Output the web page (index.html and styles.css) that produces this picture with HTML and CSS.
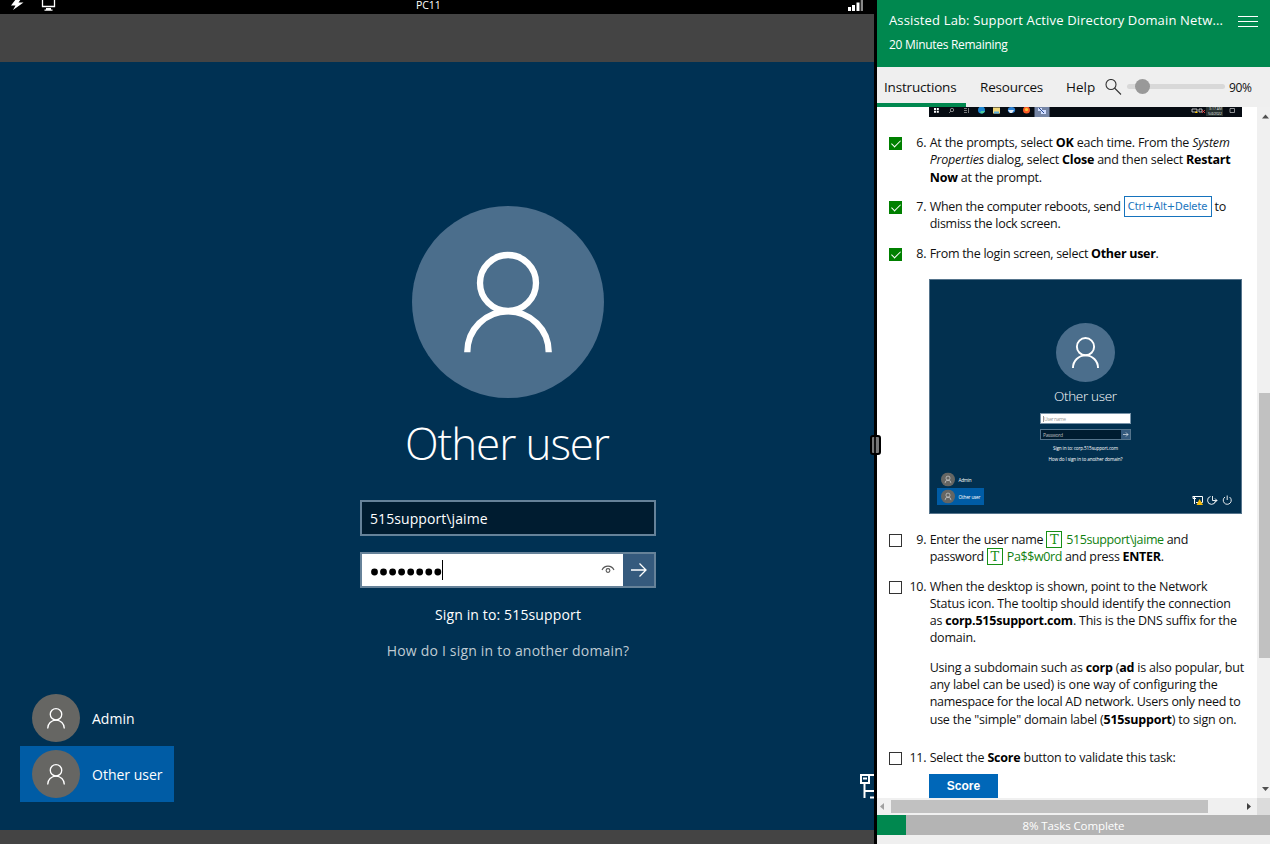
FILE: index.html
```html
<!DOCTYPE html>
<html lang="en">
<head>
<meta charset="utf-8">
<title>PC11 - Assisted Lab</title>
<link rel="stylesheet" href="styles.css">
</head>
<body>
<svg class="defs" aria-hidden="true">
  <symbol id="person" viewBox="0 0 192 192"><circle cx="96" cy="77" r="28"/><path d="M55.300 146.200v-.2a40.700 40.700 0 0 1 81.400 0v.2"/></symbol>
</svg>
<div class="app">
  <section class="vm">
    <header class="vm-bar">
      <div class="vm-tools">
        <svg width="60" height="14"><path d="M16 -1h5l-2.500 3.500h5L13 10l2.500-4.500h-4.500z" fill="#fff"/><path d="M42.500 -1v7.500h12V-1M42 6.500h13" fill="none" stroke="#fff" stroke-width="1.300"/><path d="M46 8h5v1.500h1.500v1.200h-8V9.500h1.500z" fill="#fff"/></svg>
      </div>
      <div class="vm-name">PC11</div>
      <svg class="signal" width="18" height="14"><path d="M0 7h3v4H0zM4 5h3v6H4zM8.500 2.500h3V11h-3z" fill="#fff"/><path d="M12.700 0h2.300v11h-2.300z" fill="#888"/></svg>
    </header>
    <div class="screen">
      <div class="login">
        <svg class="avatar" viewBox="0 0 192 192"><circle class="disc" cx="96" cy="96" r="96"/><use href="#person"/></svg>
        <h1>Other user</h1>
        <div class="field name">515support\jaime</div>
        <div class="field pass">
          <svg class="dots" width="76" height="28"><g fill="#000"><circle cx="4.500" cy="16" r="3.400"/><circle cx="13.500" cy="16" r="3.400"/><circle cx="22.600" cy="16" r="3.400"/><circle cx="31.600" cy="16" r="3.400"/><circle cx="40.700" cy="16" r="3.400"/><circle cx="49.700" cy="16" r="3.400"/><circle cx="58.800" cy="16" r="3.400"/><circle cx="67.800" cy="16" r="3.400"/></g><path d="M72.500 4v20" stroke="#000"/></svg>
          <svg class="eye" width="14" height="12" fill="none" stroke="#555" stroke-width="1.100"><path d="M1 6C3.500.800 10.500.800 13 6"/><circle cx="7" cy="6.500" r="1.900"/></svg>
          <span class="go"><svg width="18" height="16" fill="none" stroke="#fff" stroke-width="1.300"><path d="M1 8h15M9.500 1.500 16 8l-6.500 6.500"/></svg></span>
        </div>
        <div class="domain">Sign in to: 515support</div>
        <div class="help-link">How do I sign in to another domain?</div>
      </div>
      <div class="users">
        <div class="user"><svg class="avatar small" viewBox="0 0 192 192"><circle class="disc" cx="96" cy="96" r="96"/><use href="#person" transform="translate(17.300 18) scale(.82)"/></svg><span>Admin</span></div>
        <div class="user active"><svg class="avatar small" viewBox="0 0 192 192"><circle class="disc" cx="96" cy="96" r="96"/><use href="#person" transform="translate(17.300 18) scale(.82)"/></svg><span>Other user</span></div>
      </div>
      <svg class="net" width="28" height="28" fill="none" stroke="#fff" stroke-width="2"><path d="M0 3h24M1 3v8h8V3M4.500 11v15M4.500 19H24M10 25.500h12M3 6.500h4"/></svg>
    </div>
  </section>
  <div class="splitter"><span class="grip"></span></div>
  <aside class="lab">
    <header class="lab-head">
      <div><div class="lab-title">Assisted Lab: Support Active Directory Domain Netw...</div><div class="remaining">20 Minutes Remaining</div></div>
      <div class="burger"><i></i><i></i><i></i></div>
    </header>
    <nav class="tabs">
      <div class="tab on">Instructions</div><div class="tab res">Resources</div><div class="tab hlp">Help</div>
      <svg class="mag" width="18" height="18" fill="none" stroke="#333" stroke-width="1.100"><circle cx="6" cy="5.500" r="5"/><path d="m9.500 9 6.500 6.500"/></svg>
      <div class="slider"><span class="knob"></span></div>
      <div class="pct">90%</div>
    </nav>
    <div class="body">
      <div class="content">
        <svg class="taskbar" width="313" height="10">
          <rect width="313" height="10" fill="#060b12"/><rect x="105.500" width="15" height="10" fill="#7585a5"/><rect x="277" width="17" height="9" fill="#26312f"/>
          <path d="M5 1h2v2H5zM7.800 1h2v2h-2zM5 3.800h2v2H5zM7.800 3.800h2v2h-2z" fill="#fff"/>
          <circle cx="23" cy="3" r="1.700" fill="none" stroke="#bbb" stroke-width=".7"/><path d="m22 4-2 2M35 1.500h3M35 3.500h3M35 5.500h3M39.500 1v5" stroke="#aaa" stroke-width=".7"/>
          <circle cx="52.500" cy="3" r="3.500" fill="#1d86d0"/><path d="M51 6a3.500 3.500 0 0 0 5-2h-4z" fill="#4dce9b"/>
          <path d="M64 .5h7v6h-7z" fill="#f1d77b"/><path d="M65 4.500h5v2h-5z" fill="#5fb1de"/>
          <ellipse cx="82.500" cy="3" rx="3.700" ry="3" fill="#2f83d4"/><path d="M79 3h6l-2 3h-2z" fill="#dfe9f5"/>
          <circle cx="97.500" cy="3" r="3.500" fill="#fa5b27"/><circle cx="97.500" cy="2.500" r="1.600" fill="#ffc83a"/>
          <path d="M109 1h4v3h-4zM112 3h5v4h-5z" fill="#cfdcff"/><path d="m110 1 5 5" stroke="#24478f"/>
          <path d="M263 2h5v3h-5zM270 2h3v3h-3z" fill="none" stroke="#ddd" stroke-width=".8"/><path d="m266 6 1-2 2 2z" fill="#fc0"/><path d="m273 3 3 3m0-3-3 3" stroke="#f44" stroke-width=".8"/>
          <text x="280" y="2.500" font-size="3.500" fill="#ddd">3:17 AM</text><text x="279" y="7.500" font-size="4" fill="#ddd" textLength="14">5/4/2022</text>
          <path d="M301 1.500h4.500v4H301z" fill="none" stroke="#ccc" stroke-width=".7"/>
        </svg>
        <div class="item i6"><span class="box done"></span><span class="num">6.</span><div class="txt"><p>At the prompts, select <b>OK</b> each time. From the <em>System</em></p><p><em>Properties</em> dialog, select <b>Close</b> and then select <b>Restart</b></p><p><b>Now</b> at the prompt.</p></div></div>
        <div class="item i7"><span class="box done"></span><span class="num">7.</span><div class="txt"><p class="tight">When the computer reboots, send <span class="keys">Ctrl+Alt+Delete</span> to</p><p class="tight">dismiss the lock screen.</p></div></div>
        <div class="item i8"><span class="box done"></span><span class="num">8.</span><div class="txt"><p class="tight">From the login screen, select <b>Other user</b>.</p></div></div>
        <svg class="shot" width="313" height="235" viewBox="0 0 313 235" fill="#fff">
          <rect x=".5" y=".5" width="312" height="234" fill="#02304f" stroke="#55748c"/>
          <svg class="avatar" x="127" y="44" width="59" height="59" viewBox="0 0 192 192"><circle class="disc" cx="96" cy="96" r="96"/><use href="#person"/></svg>
          <text class="thin" x="125" y="122" font-size="13.500" textLength="63">Other user</text>
          <rect x="111.500" y="134.500" width="90" height="10" stroke="#7893a8"/><path d="M114.500 137v6" stroke="#333" stroke-width=".5"/><text x="115" y="141.500" font-size="5" fill="#999" textLength="22">User name</text>
          <rect x="111.500" y="150.500" width="90" height="10" fill="#001c30" stroke="#55748c"/><text x="114" y="157.500" font-size="5" fill="#bbb" textLength="20">Password</text><path d="M192 151h9v9h-9z" fill="#355a7d"/><path d="M194 155.500h5m-2-2 2 2-2 2" fill="none" stroke="#fff" stroke-width=".6"/>
          <text x="124" y="171" font-size="4.700" textLength="65">Sign in to: corp.515support.com</text>
          <text x="119.500" y="182" font-size="4.700" textLength="74">How do I sign in to another domain?</text>
          <rect x="8" y="209" width="47" height="17" fill="#005ca5"/>
          <svg class="avatar small" x="12" y="193.500" width="14" height="14" viewBox="0 0 192 192"><circle class="disc" cx="96" cy="96" r="96"/><use href="#person"/></svg>
          <svg class="avatar small" x="12" y="210.500" width="14" height="14" viewBox="0 0 192 192"><circle class="disc" cx="96" cy="96" r="96"/><use href="#person"/></svg>
          <text x="29.500" y="202.500" font-size="4.700" textLength="13">Admin</text><text x="29.500" y="219.500" font-size="4.700" textLength="22">Other user</text>
          <g fill="none" stroke="#fff"><path d="M264 217.500h9.500v6H267M265.500 217v8M264 217v2.500h3M268 225.500h5"/><path d="M281.500 217.500a4 4 0 1 0 5 4.500M283.500 217v4.500h4.500M286 219.500l2 2-2 2" stroke-width=".9"/><path d="M296 218a4 4 0 1 0 4.500 0M298.200 216.500v4.500" stroke-width=".9"/></g><path d="m267.500 226 3-6 3.500 6z" fill="#f3b90b"/>
        </svg>
        <div class="item i9"><span class="box"></span><span class="num">9.</span><div class="txt"><p class="tight">Enter the user name <span class="t">T</span> <span class="green">515support\jaime</span> and</p><p class="tight">password <span class="t">T</span> <span class="green">Pa$$w0rd</span> and press <b>ENTER</b>.</p></div></div>
        <div class="item i10"><span class="box"></span><span class="num">10.</span><div class="txt"><p>When the desktop is shown, point to the Network</p><p>Status icon. The tooltip should identify the connection</p><p>as <b>corp.515support.com</b>. This is the DNS suffix for the</p><p>domain.</p><p class="para">Using a subdomain such as <b>corp</b> (<b>ad</b> is also popular, but</p><p>any label can be used) is one way of configuring the</p><p class="tight">namespace for the local AD network. Users only need to</p><p>use the "simple" domain label (<b>515support</b>) to sign on.</p></div></div>
        <div class="item i11"><span class="box"></span><span class="num">11.</span><div class="txt"><p>Select the <b>Score</b> button to validate this task:</p></div></div>
        <div class="score">Score</div>
      </div>
      <div class="vscroll"><svg width="13" height="691"><path d="M2 286h11v265H2z" fill="#c1c1c1"/><path d="M5 11.500h7L8.500 7.500zM5 680h7l-3.500 4z" fill="#505050"/></svg></div>
    </div>
    <div class="hscroll"><svg width="393" height="17"><path d="M14 2h317v13H14z" fill="#c1c1c1"/><path d="M7 5v7L3 8.500z" fill="#a0a0a0"/><path d="M370 5v7l4-3.500z" fill="#404040"/><path d="M380 0h13v17h-13z" fill="#dcdcdc"/></svg></div>
    <div class="progress"><div class="bar" style="width:29px"></div><span>8% Tasks Complete</span></div>
  </aside>
</div>
</body>
</html>
```
FILE: styles.css
```css
* { box-sizing: border-box; }
body { margin: 0; font-family: "Open Sans", "Noto Sans", sans-serif; overflow: hidden; }
svg { display: block; flex: none; }
p { margin: 0; }
.defs { position: absolute; width: 0; height: 0; }
.app { display: flex; width: 1270px; height: 844px; overflow: hidden; }

.vm { width: 874px; background: #444; overflow: hidden; }
.vm-bar { height: 14px; background: #000; color: #fff; display: flex; justify-content: space-between; margin-bottom: 48px; }
.vm-tools { width: 416px; }
.vm-name { flex: 1; font-size: 10.5px; line-height: 11px; letter-spacing: -.1px; }
.signal { margin-right: 8px; }
.screen { position: relative; width: 1016px; height: 768px; background: #003153; color: #fff; }
.login { display: flex; flex-direction: column; align-items: center; padding-top: 144px; }
.avatar { fill: none; stroke: #fff; stroke-width: 6.3; }
.login .avatar { width: 192px; height: 192px; }
.disc { fill: #4b6e8c; stroke: none; }
.small { stroke-width: 6.5; }
.users .small { width: 48px; height: 48px; }
.small .disc { fill: #666663; }
h1 { margin: 12px 0 0; height: 90px; line-height: 67px; font-weight: 300; font-size: 44px; letter-spacing: -1.1px; text-indent: -2px; white-space: nowrap; }
.field { width: 296px; height: 36px; border: 2px solid #668299; display: flex; align-items: center; font-size: 14px; letter-spacing: .08px; }
.name { background: #001c30; padding-left: 8px; }
.pass { background: #fff; margin-top: 16px; padding-left: 8px; }
.eye { margin: 0 8px 0 auto; }
.go { width: 31px; height: 32px; background: #355a7d; display: grid; place-items: center; }
.domain, .help-link { font-size: 14px; line-height: 20px; margin-top: 17px; letter-spacing: .14px; white-space: nowrap; }
.help-link { margin-top: 16px; letter-spacing: .2px; color: #bfcbd4; }
.users { position: absolute; left: 20px; bottom: 28px; font-size: 14px; }
.user { width: 154px; height: 56px; padding-left: 12px; display: flex; align-items: center; gap: 12px; white-space: nowrap; }
.active { background: #005ca5; }
.net { position: absolute; left: 860px; top: 710px; }

.splitter { width: 3px; background: #000; position: relative; }
.grip { position: absolute; z-index: 2; left: -4px; top: 435px; width: 11px; height: 20px; border: 2px solid #000; border-radius: 3px; background: linear-gradient(90deg, #777 0 2px, #111 2px 4px, #777 4px 7px); }

.lab { width: 393px; background: #efefef; display: flex; flex-direction: column; }
.lab-head { height: 67px; background: #00884f; color: #fff; padding: 10px 12px; display: flex; justify-content: space-between; white-space: nowrap; }
.lab-title { font-size: 13px; line-height: 20px; letter-spacing: .15px; }
.remaining { font-size: 12px; line-height: 18px; margin-top: 6px; letter-spacing: -.3px; }
.burger { width: 20px; padding-top: 6px; display: flex; flex-direction: column; gap: 4px; }
.burger i { height: 1px; background: #fff; }
.tabs { height: 40px; display: flex; font-size: 13.5px; line-height: 40px; letter-spacing: -.18px; color: #111; white-space: nowrap; }
.tab.on { width: 89px; padding-left: 7px; border-bottom: 4px solid #00884f; }
.res { width: 86px; padding-left: 14px; }
.hlp { width: 53px; padding-left: 14px; letter-spacing: 0; }
.mag { margin: 12px 4px 0 0; }
.slider { margin: 17px 4px 0 0; width: 98px; height: 5px; border-radius: 3px; background: #d8d8d8; }
.knob { display: block; width: 15px; height: 15px; border-radius: 50%; background: #999; margin: -5px 0 0 8px; }
.pct { font-size: 12px; letter-spacing: -.35px; line-height: 41px; }

.body { height: 691px; display: flex; background: #fff; overflow: hidden; }
.content { width: 380px; overflow: hidden; font-size: 12.5px; line-height: 17.15px; color: #111; }
.vscroll, .hscroll { background: #f0f0f0; }
.taskbar { margin-left: 52px; margin-bottom: 17.3px; }
.item { display: flex; padding-left: 12px; margin-bottom: 12.500px; white-space: nowrap; letter-spacing: -.22px; }
.tight { letter-spacing: -.285px; }
.box { width: 13px; height: 13px; margin-top: 3px; border: 1px solid #333; background: #fff; flex: none; }
.done { background: #008000; border-color: #008000; }
.done::after { content: ""; display: block; width: 8px; height: 4px; border: solid #fff; border-width: 0 0 1.500px 1.500px; transform: translate(1.500px, 2px) rotate(-45deg); }
.num { width: 24.3px; margin-right: 3.4px; text-align: right; }
.txt p { height: 17.15px; }
.txt .para { margin-top: 13px; }
b { color: #000; }
.keys { display: inline-block; width: 88px; height: 21px; border: 1px solid #1673bd; color: #1673bd; font: 10px/19px "DejaVu Sans", sans-serif; letter-spacing: -.1px; text-align: center; vertical-align: middle; margin-top: -2px; }
.t { display: inline-block; width: 16px; height: 17px; border: 1px solid #159015; color: #159015; font: 13px/15px "DejaVu Serif", serif; text-align: center; vertical-align: middle; letter-spacing: 0; margin: -2px 1px 0 0; }
.green { color: #108010; letter-spacing: -.4px; }
.shot { margin: 17px 0 16.7px 52px; }
.thin { font-weight: 300; }
.i10 { margin-bottom: 21px; }
.i11 { margin-bottom: 8px; }
.score { margin-left: 52px; width: 69px; height: 32px; background: #0067b8; color: #fff; font: bold 12px/25px "Liberation Sans", Arial, sans-serif; text-align: center; }
.hscroll { height: 17px; }
.progress { position: relative; height: 20px; background: #b4b4b4; color: #fff; font-size: 11.5px; line-height: 21px; letter-spacing: -.1px; text-align: center; }
.progress .bar { position: absolute; left: 0; top: 0; height: 20px; background: #00884f; }
```
